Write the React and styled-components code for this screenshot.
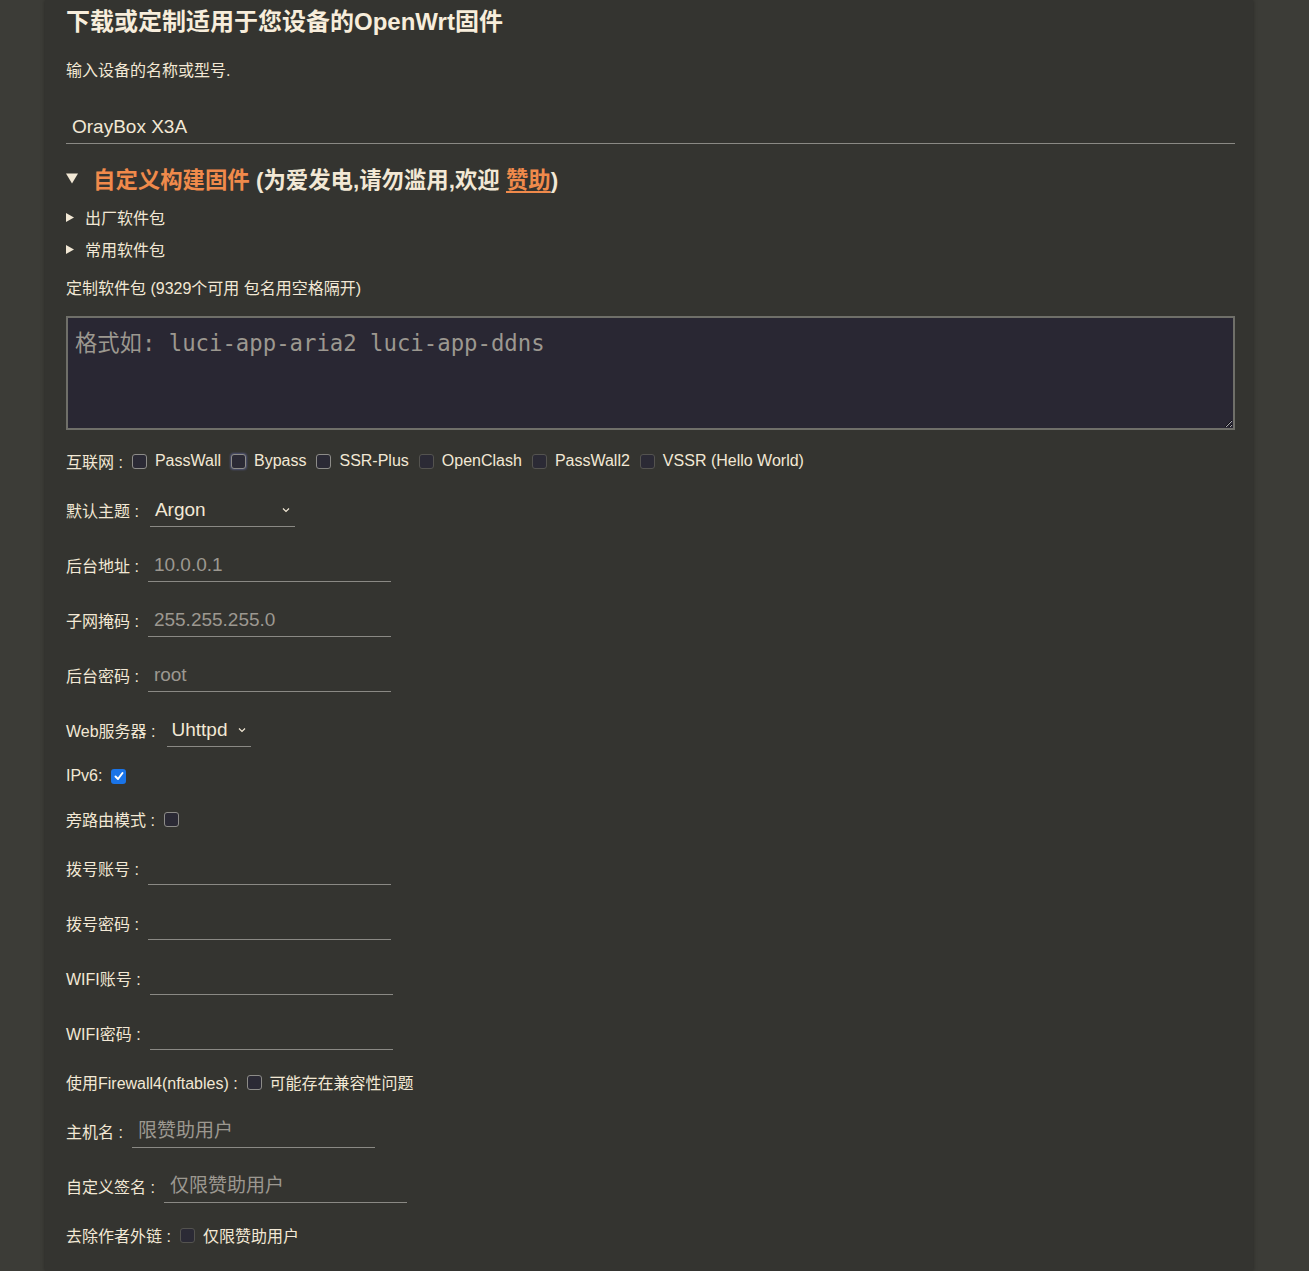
import React from 'react';
import styled, { createGlobalStyle } from 'styled-components';

const GlobalStyle = createGlobalStyle`
    html, body {
        margin: 0;
        padding: 0;
        background: #3c3c37;
    }
    body {
        font-family: "Liberation Sans", "Noto Sans CJK SC", sans-serif;
        color: #f2e8d5;
    }
`;

const Check = ({ checked, dim, focus }) => (
    <CheckBox $checked={checked} $dim={dim} $focus={focus}>
        {checked && (
            <svg width="12" height="12" viewBox="0 0 12 12">
                <polyline points="2.5,6.5 5,9 9.5,3" fill="none" stroke="#fff" strokeWidth="2" strokeLinecap="round" strokeLinejoin="round" />
            </svg>
        )}
    </CheckBox>
);

const Chevron = () => (
    <svg width="8" height="6" viewBox="0 0 8 6">
        <polyline points="1,1.5 4,4.5 7,1.5" fill="none" stroke="#f2e8d5" strokeWidth="1.2" />
    </svg>
);

// disclosure triangles of the <details> blocks
const Triangle = ({ open }) => (open ? (
    <svg width="12" height="11" viewBox="0 0 12 11">
        <polygon points="0,0.5 12,0.5 6,10.5" fill="#f2e8d5" />
    </svg>
) : (
    <svg width="8" height="9" viewBox="0 0 8 9">
        <polygon points="0,0 8,4.5 0,9" fill="#f2e8d5" />
    </svg>
));

const internet = [
    { name: 'PassWall' },
    { name: 'Bypass', focus: true },
    { name: 'SSR-Plus' },
    { name: 'OpenClash', dim: true },
    { name: 'PassWall2', dim: true },
    { name: 'VSSR (Hello World)', dim: true },
];

const App = () => {
    return (<Page>
        <GlobalStyle />
        <Card>
            <Title>下载或定制适用于您设备的OpenWrt固件</Title>
            <Hint>输入设备的名称或型号.</Hint>
            <DeviceInput defaultValue="OrayBox X3A" />

            <Summary>
                <BigMarker><Triangle open /></BigMarker>
                <Orange>自定义构建固件</Orange>
                <span>&nbsp;(为爱发电,请勿滥用,欢迎 <SponsorLink href="#">赞助</SponsorLink>)</span>
            </Summary>
            <SubSummary><SmallMarker><Triangle /></SmallMarker>出厂软件包</SubSummary>
            <SubSummary $last><SmallMarker><Triangle /></SmallMarker>常用软件包</SubSummary>

            <Hint $tight>定制软件包 (9329个可用 包名用空格隔开)</Hint>
            <Packages placeholder="格式如: luci-app-aria2 luci-app-ddns" />

            <Fields>
                <CheckRow>
                    <Label>互联网 :</Label>
                    {internet.map((item) => (
                        <Option key={item.name}>
                            <Check dim={item.dim} focus={item.focus} />
                            <span>{item.name}</span>
                        </Option>
                    ))}
                </CheckRow>

                <FieldRow>
                    <Label>默认主题 :</Label>
                    <Select $width={145}>
                        <span>Argon</span>
                        <Chevron />
                    </Select>
                </FieldRow>

                <FieldRow>
                    <Label>后台地址 :</Label>
                    <TextInput placeholder="10.0.0.1" />
                </FieldRow>
                <FieldRow>
                    <Label>子网掩码 :</Label>
                    <TextInput placeholder="255.255.255.0" />
                </FieldRow>
                <FieldRow>
                    <Label>后台密码 :</Label>
                    <TextInput placeholder="root" />
                </FieldRow>

                <FieldRow>
                    <Label>Web服务器 :</Label>
                    <Select $width={84}>
                        <span>Uhttpd</span>
                        <Chevron />
                    </Select>
                </FieldRow>

                <CheckRow $snug>
                    <Label>IPv6:</Label>
                    <Check checked />
                </CheckRow>
                <CheckRow>
                    <Label>旁路由模式 :</Label>
                    <Check />
                </CheckRow>

                <FieldRow>
                    <Label>拨号账号 :</Label>
                    <TextInput />
                </FieldRow>
                <FieldRow>
                    <Label>拨号密码 :</Label>
                    <TextInput />
                </FieldRow>
                <FieldRow>
                    <Label>WIFI账号 :</Label>
                    <TextInput />
                </FieldRow>
                <FieldRow>
                    <Label>WIFI密码 :</Label>
                    <TextInput />
                </FieldRow>

                <CheckRow>
                    <Label>使用Firewall4(nftables) :</Label>
                    <Option>
                        <Check />
                        <span>可能存在兼容性问题</span>
                    </Option>
                </CheckRow>

                <FieldRow>
                    <Label>主机名 :</Label>
                    <TextInput placeholder="限赞助用户" />
                </FieldRow>
                <FieldRow>
                    <Label>自定义签名 :</Label>
                    <TextInput placeholder="仅限赞助用户" />
                </FieldRow>

                <CheckRow>
                    <Label>去除作者外链 :</Label>
                    <Option>
                        <Check dim />
                        <span>仅限赞助用户</span>
                    </Option>
                </CheckRow>
            </Fields>
        </Card>
    </Page>)
}

const Page = styled.div`
    min-height: 1271px;
    padding-left: 45px;
`;

const Card = styled.div`
    width: 1208px;
    min-height: 1271px;
    box-sizing: border-box;
    padding: 7px 18px 20px 21px;
    background: #343430;
    box-shadow: 0 0 4px rgba(0, 0, 0, 0.35);
`;

const Title = styled.h2`
    margin: 0;
    font-size: 24px;
    line-height: 30px;
    font-weight: 700;
    color: #f7eddb;
`;

const Hint = styled.div`
    margin-top: ${(p) => (p.$tight ? '19px' : '24px')};
    font-size: 16px;
    line-height: 20px;
`;

const DeviceInput = styled.input`
    display: block;
    width: 100%;
    box-sizing: border-box;
    height: 33px;
    margin-top: 30px;
    padding: 0 6px;
    background: transparent;
    border: none;
    border-bottom: 1.5px solid #8a8984;
    color: #f2e8d5;
    font-family: inherit;
    font-size: 19px;
    outline: none;
`;

const Summary = styled.div`
    display: flex;
    align-items: center;
    margin-top: 20px;
    height: 28px;
    font-size: 22.4px;
    font-weight: 700;
`;

const BigMarker = styled.span`
    display: flex;
    align-items: center;
    width: 27px;
    padding-top: 1px;
`;

const Orange = styled.span`
    color: #f08a4b;
`;

const SponsorLink = styled.a`
    color: #f08a4b;
    text-decoration: underline;
    text-underline-offset: 3px;
`;

const SubSummary = styled.div`
    display: flex;
    align-items: center;
    height: 22px;
    margin-top: ${(p) => (p.$last ? '10px' : '14px')};
    font-size: 16px;
`;

const SmallMarker = styled.span`
    display: flex;
    align-items: center;
    width: 19px;
`;

const Packages = styled.textarea`
    display: block;
    width: 100%;
    height: 114px;
    box-sizing: border-box;
    margin-top: 17px;
    padding: 11px 7px 8px;
    background: #292733;
    border: 2px solid #6f6f69;
    color: #f2e8d5;
    font-family: "DejaVu Sans Mono", "Noto Sans CJK SC", monospace;
    font-size: 22.3px;
    line-height: 28px;
    resize: vertical;
    outline: none;
    &::placeholder {
        color: #9c9890;
    }
`;

const Fields = styled.div`
    display: flex;
    flex-direction: column;
    gap: 21px;
    margin-top: 20px;
`;

const CheckRow = styled.div`
    display: flex;
    align-items: center;
    height: 22px;
    margin-top: ${(p) => (p.$snug ? '-3px' : '0')};
    font-size: 16px;
`;

const FieldRow = styled.div`
    display: flex;
    align-items: center;
    height: 34px;
    font-size: 16px;
`;

const Label = styled.span`
    white-space: nowrap;
    margin-right: 5px;
`;

const Option = styled.label`
    display: flex;
    align-items: center;
    gap: 8px;
    margin-right: 6px;
`;

const CheckBox = styled.span`
    display: inline-flex;
    align-items: center;
    justify-content: center;
    width: 15px;
    height: 15px;
    box-sizing: border-box;
    margin-left: 4px;
    border-radius: 3px;
    background: ${(p) => (p.$checked ? '#1a74e8' : '#2b2a35')};
    border: ${(p) => (p.$checked ? 'none' : p.$dim ? '1.5px solid #54534f' : '1.5px solid #8d8c88')};
    box-shadow: ${(p) => (p.$focus ? '0 0 2px 1px rgba(110, 120, 200, 0.45)' : 'none')};
`;

const TextInput = styled.input`
    width: 243px;
    height: 34px;
    box-sizing: border-box;
    margin-left: 4px;
    padding: 0 6px;
    background: transparent;
    border: none;
    border-bottom: 1.5px solid #8a8984;
    color: #f2e8d5;
    font-family: inherit;
    font-size: 19px;
    outline: none;
    &::placeholder {
        color: #9c9890;
    }
`;

const Select = styled.div`
    display: flex;
    align-items: center;
    justify-content: space-between;
    width: ${(p) => p.$width}px;
    height: 34px;
    box-sizing: border-box;
    margin-left: 6px;
    padding: 0 5px 0 5px;
    border-bottom: 1.5px solid #8a8984;
    font-size: 19px;
`;

export default App;
